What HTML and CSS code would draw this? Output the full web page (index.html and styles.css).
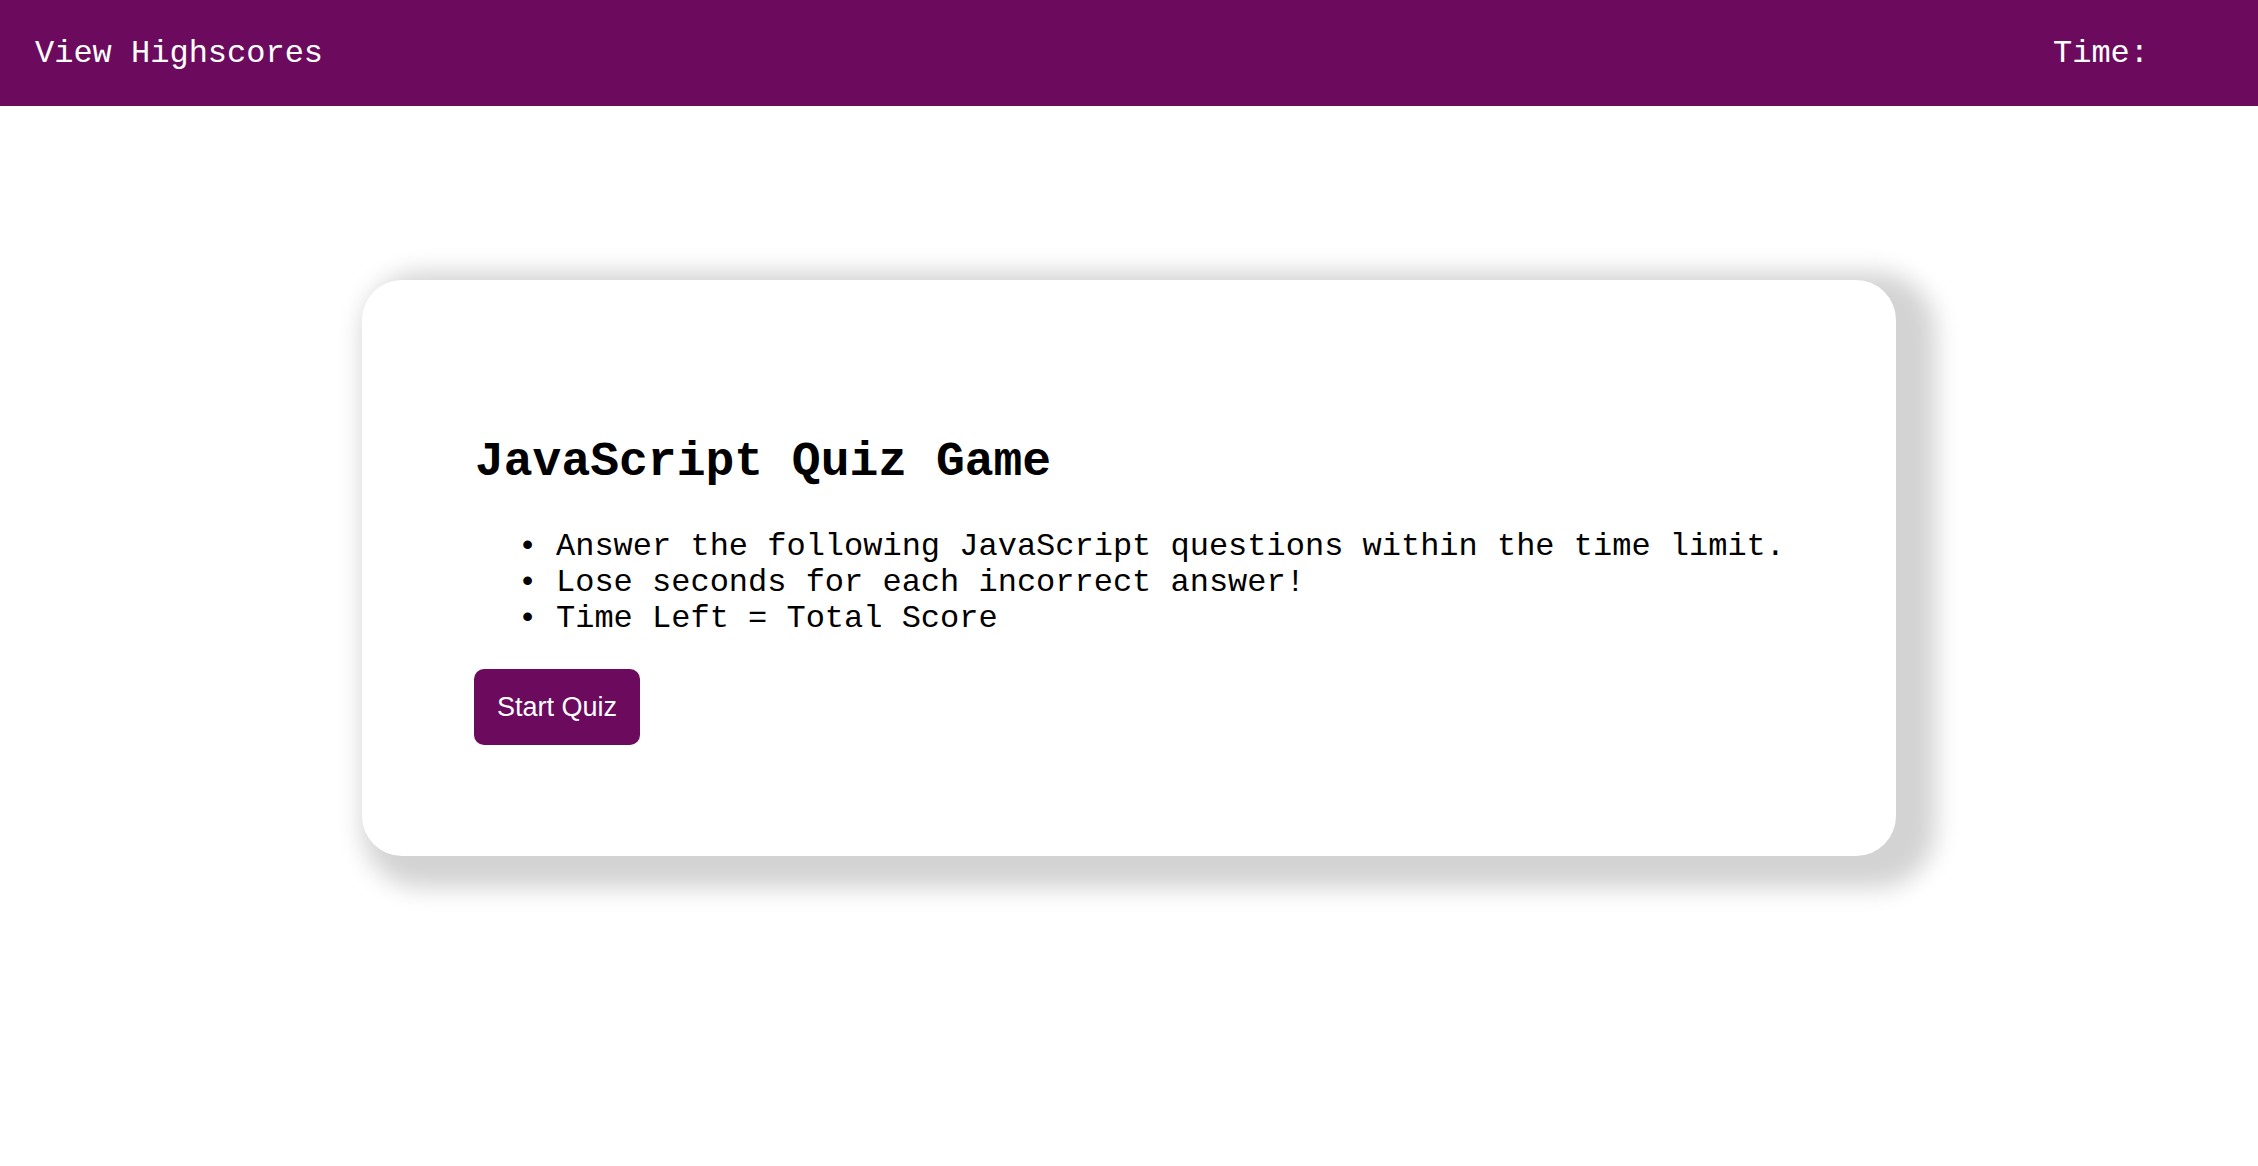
FILE: index.html
```html
<!DOCTYPE html>
<html lang="en">
<head>
<meta charset="utf-8">
<title>JavaScript Quiz Game</title>
<link rel="stylesheet" href="styles.css">
</head>
<body>
<header class="topbar">
  <a class="highscores" href="#">View Highscores</a>
  <div class="timer">Time: <span class="time-value"></span></div>
</header>
<main class="page">
  <section class="card">
    <h1 class="title">JavaScript Quiz Game</h1>
    <ul class="rules">
      <li>Answer the following JavaScript questions within the time limit.</li>
      <li>Lose seconds for each incorrect answer!</li>
      <li>Time Left = Total Score</li>
    </ul>
    <button class="start-btn" type="button">Start Quiz</button>
  </section>
</main>
</body>
</html>
```
FILE: styles.css
```css
html, body {
  margin: 0;
  padding: 0;
  background: #ffffff;
}

body {
  font-family: "Liberation Mono", "Courier New", monospace;
  font-size: 32px;
  color: #000;
  min-height: 100vh;
}

.topbar {
  height: 106px;
  background: #6c0b5e;
  display: flex;
  align-items: center;
  justify-content: space-between;
  padding: 0 109px 0 35px;
  box-sizing: border-box;
}

.highscores {
  color: #ffffff;
  text-decoration: none;
}

.timer {
  color: #ffffff;
}

.page {
  display: flex;
  justify-content: center;
  padding: 174px 0 200px;
}

.card {
  width: 1534px;
  height: 576px;
  box-sizing: border-box;
  background: #ffffff;
  border-radius: 40px;
  box-shadow: 20px 12px 25px 20px lightgray;
  padding: 155px 40px 0 112px;
}

.title {
  margin: 0 0 40px 1px;
  font-size: 48px;
  font-weight: bold;
  line-height: normal;
}

.rules {
  margin: 0 0 33px 0;
  padding-left: 82px;
  line-height: 35.8px;
  list-style: none;
}

.rules li {
  white-space: nowrap;
}

.rules li::before {
  content: "\2022";
  display: inline-block;
  width: 38px;
  margin-left: -38px;
}

.start-btn {
  font-family: "Liberation Sans", Arial, sans-serif;
  font-size: 27px;
  color: #ffffff;
  background: #6c0b5e;
  border: none;
  border-radius: 10px;
  padding: 0 23px;
  height: 76px;
  white-space: nowrap;
  cursor: pointer;
}
```
